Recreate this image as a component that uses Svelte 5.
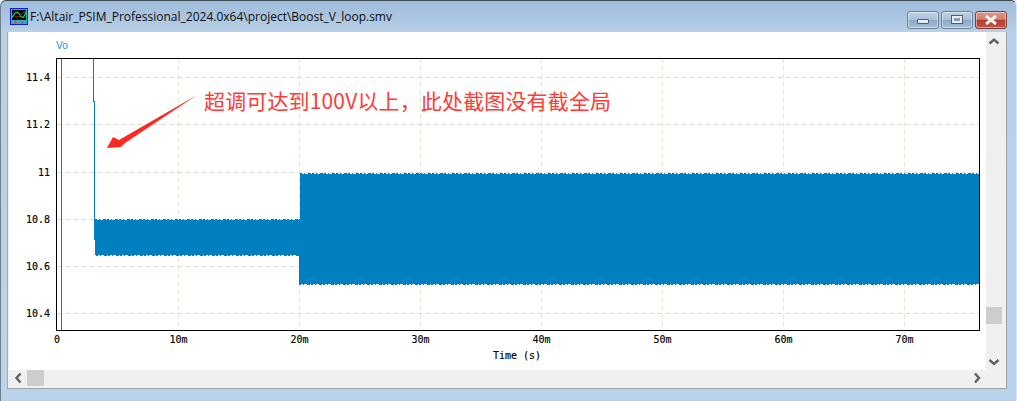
<script>
  const yTicks = [
    { label: '11.4', y: 77 },
    { label: '11.2', y: 124 },
    { label: '11', y: 172 },
    { label: '10.8', y: 219 },
    { label: '10.6', y: 266 },
    { label: '10.4', y: 313 }
  ];
  const xTicks = [
    { label: '0', x: 57 },
    { label: '10m', x: 178.5 },
    { label: '20m', x: 299.5 },
    { label: '30m', x: 420.5 },
    { label: '40m', x: 541.5 },
    { label: '50m', x: 662.5 },
    { label: '60m', x: 783.5 },
    { label: '70m', x: 904.5 }
  ];
</script>

<div class="window">
  <header class="titlebar">
    <svg class="appicon" viewBox="0 0 18 17" width="18" height="17" aria-hidden="true">
      <rect x="0.5" y="0.5" width="17" height="16" fill="#1fb4c8" stroke="#0a20c8" />
      <rect x="2" y="2" width="14" height="10" fill="#000" />
      <path d="M2 10 C5 3 8 3 10 7 S14 10 16 4" fill="none" stroke="#22d04a" stroke-width="1.2" />
      <path d="M2 5 C5 9 8 10 10 8 S14 3 16 3" fill="none" stroke="#e02020" stroke-width="1" />
      <path d="M4 14.5h3M5.5 13v3M11 14.5h3M12.5 13v3" stroke="#e04040" stroke-width="1" />
    </svg>
    <span class="title">F:\Altair_PSIM_Professional_2024.0x64\project\Boost_V_loop.smv</span>
    <div class="controls">
      <div class="btn"><span class="min-glyph"></span></div>
      <div class="btn"><span class="max-glyph"></span></div>
      <div class="btn close">
        <svg viewBox="0 0 16 10" width="16" height="10" aria-hidden="true">
          <path d="M3 1 L13 9 M13 1 L3 9" stroke="#eef0f0" stroke-width="3" />
        </svg>
      </div>
    </div>
  </header>

  <div class="frame">
    <div class="client">
      <svg class="plot" viewBox="9 0 977 338" width="977" height="338" aria-label="Waveform plot">
        <g transform="translate(0,-32)">
          <text class="vo" x="56" y="49">Vo</text>

          {#each yTicks as t}
            <line class="grid" x1="57" x2="979" y1={t.y + 0.5} y2={t.y + 0.5} />
            <text class="tick" x="50" y={t.y + 4} text-anchor="end">{t.label}</text>
          {/each}
          {#each xTicks as t}
            <line class="gridv" x1={t.x} x2={t.x} y1="58" y2="330" />
            <text class="tick" x={t.x} y="343" text-anchor="middle">{t.label}</text>
          {/each}
          <text class="tick" x="517" y="359" text-anchor="middle">Time (s)</text>

          <rect class="wave" x="61" y="58" width="1" height="272" />
          <rect class="wave" x="93" y="58" width="1" height="44" />
          <rect class="wave" x="94" y="101" width="1" height="119" />
          <rect class="wave" x="94" y="220" width="2" height="20" />
          <rect class="wave" x="95" y="220" width="205" height="35" />
          <rect class="wave" x="300" y="174" width="679" height="110" />
          <rect class="wave" x="299" y="220" width="2" height="64" />
          <line class="noise" x1="95" x2="300" y1="219.5" y2="219.5" />
          <line class="noise" x1="96" x2="299" y1="255.5" y2="255.5" />
          <line class="noise" x1="300" x2="979" y1="173.5" y2="173.5" />
          <line class="noise" x1="299" x2="979" y1="284.5" y2="284.5" />

          <rect class="axes" x="56.5" y="58.5" width="923" height="272" />

          <polygon class="arrow" points="197,95 125,143 121,147 107,148 113,137 119,140" />
          <text class="note" x="204" y="109">超调可达到100V以上，此处截图没有截全局</text>
        </g>
      </svg>

      <div class="vbar">
        <svg class="arr up" viewBox="0 0 16 16" width="16" height="16" aria-hidden="true"><path d="M3.5 10.5 L8 6.5 L12.5 10.5" /></svg>
        <div class="vtrack"><div class="vthumb"></div></div>
        <svg class="arr" viewBox="0 0 16 16" width="16" height="16" aria-hidden="true"><path d="M3.5 6 L8 10 L12.5 6" /></svg>
      </div>
      <div class="hbar">
        <svg class="arr start" viewBox="0 0 16 16" width="16" height="16" aria-hidden="true"><path d="M10.5 3.5 L6.5 8 L10.5 12.5" /></svg>
        <div class="hthumb"></div>
        <svg class="arr end" viewBox="0 0 16 16" width="16" height="16" aria-hidden="true"><path d="M6 3.5 L10 8 L6 12.5" /></svg>
      </div>
      <div class="corner"></div>
    </div>
  </div>
  <div class="below"></div>
</div>

<style>
  :global(body) {
    margin: 0;
    background: #f0f6fc;
  }
  .window {
    width: 1017px;
    height: 401px;
    display: flex;
    flex-direction: column;
    box-sizing: border-box;
    border-top: 1px solid #3c4a52;
    border-left: 1px solid #6f7f8c;
    border-right: 1px solid #d8e6f2;
    border-radius: 6px 6px 0 0;
    background: linear-gradient(180deg, #9fbcdb 0, #a8c4e0 14px, #b9d1e8 32px, #bad3ea 100%);
    overflow: hidden;
  }
  .titlebar {
    height: 31px;
    display: flex;
    align-items: center;
    flex: none;
    padding-left: 9px;
  }
  .appicon {
    flex: none;
  }
  .title {
    margin-left: 2px;
    font: 12px/16px "Open Sans", "Noto Sans", sans-serif;
    color: #0c0c0c;
    white-space: nowrap;
  }
  .controls {
    margin-left: auto;
    margin-right: 9px;
    margin-top: 6px;
    display: flex;
    gap: 2px;
  }
  .btn {
    width: 30px;
    height: 16px;
    border: 1px solid #6d8097;
    border-radius: 3px;
    background: linear-gradient(180deg, #bfd2e6 0, #a9c0d9 48%, #8ba8c8 52%, #a7c0da 100%);
    box-shadow: inset 0 0 0 1px rgba(255, 255, 255, 0.45);
    display: flex;
    align-items: center;
    justify-content: center;
  }
  .btn.close {
    border-color: #7c3c38;
    background: linear-gradient(180deg, #dd9a8e 0, #cf7e70 46%, #b23a2c 52%, #c4564a 100%);
  }
  .min-glyph {
    width: 10px;
    height: 3px;
    margin-top: 3px;
    background: #e8edf2;
    border: 1px solid #4f5f70;
    border-radius: 1px;
  }
  .max-glyph {
    width: 6px;
    height: 3px;
    border: 2px solid #e8edf2;
    outline: 1px solid #4f5f70;
    background: #8a9cb3;
  }
  .frame {
    flex: none;
    margin-left: 6px;
    margin-right: 9px;
    box-sizing: border-box;
    border-left: 1px solid #a8a8a8;
    border-right: 1px solid #a0a0a0;
    border-bottom: 1px solid #a0a0a0;
    background: #f0f0f0;
    padding: 0 3px 1px 1px;
  }
  .client {
    width: 993px;
    display: grid;
    grid-template-columns: 977px 16px;
    grid-template-rows: 338px 17px;
    background: #fff;
  }
  .plot {
    display: block;
    background: #fff;
  }
  .vo {
    font: 10px "DejaVu Sans", sans-serif;
    fill: #3a96d6;
  }
  .tick {
    font: 10px "DejaVu Sans Mono", monospace;
    fill: #000;
    stroke: #000;
    stroke-width: 0.15px;
  }
  .grid {
    stroke: #dcdcd2;
    stroke-width: 1;
    stroke-dasharray: 5 3;
  }
  .gridv {
    stroke: #e0e8d8;
    stroke-width: 1;
    stroke-dasharray: 5 3;
  }
  .wave {
    fill: #0080c0;
  }
  .noise {
    stroke: #0080c0;
    stroke-width: 1;
    stroke-dasharray: 2 2 1 3 3 1;
  }
  .axes {
    fill: none;
    stroke: #000;
    stroke-width: 1;
  }
  .arrow {
    fill: #ff2a1f;
  }
  .note {
    font: 21px "Noto Sans CJK SC", "Noto Sans", sans-serif;
    fill: #ff3b36;
    letter-spacing: 0.15px;
  }
  .vbar {
    background: #f0f0f0;
    display: flex;
    flex-direction: column;
  }
  .up {
    margin-top: 1px;
  }
  .vtrack {
    flex: 1;
    padding-top: 258px;
  }
  .vthumb {
    height: 17px;
    background: #cdcdcd;
  }
  .hbar {
    background: #f0f0f0;
    display: flex;
    align-items: flex-start;
  }
  .start {
    margin-left: 1px;
  }
  .hthumb {
    width: 17px;
    height: 16px;
    margin-left: 1px;
    background: #cdcdcd;
  }
  .hbar .end {
    margin-left: auto;
    margin-right: 1px;
  }
  .corner {
    background: #f0f0f0;
  }
  .arr {
    flex: none;
    display: block;
  }
  .arr path {
    fill: none;
    stroke: #606060;
    stroke-width: 2.4;
  }
  .below {
    flex: none;
    height: 3px;
  }
</style>
